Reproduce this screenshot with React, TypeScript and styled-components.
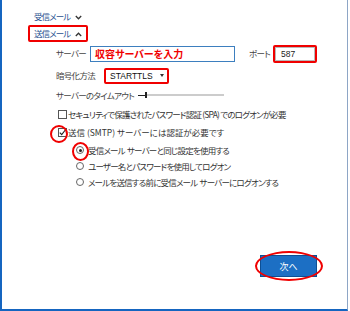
import styled, { createGlobalStyle } from 'styled-components'

//-----------------------------------------------------------------------------
// Global
//-----------------------------------------------------------------------------
const GlobalStyle = createGlobalStyle`
  html, body {
    margin: 0;
    padding: 0;
    background: #ffffff;
  }
  body {
    font-family: "Noto Sans CJK JP", "Liberation Sans", sans-serif;
    font-feature-settings: "palt";
  }
`

//-----------------------------------------------------------------------------
// Icons
//-----------------------------------------------------------------------------
const Chevron = ({ up }: { up?: boolean }): JSX.Element => (
  <svg width="7" height="5" viewBox="0 0 7 5">
    <path
      d={up ? 'M0.8 4 L3.5 1.2 L6.2 4' : 'M0.8 1 L3.5 3.8 L6.2 1'}
      fill="none"
      stroke="#333"
      strokeWidth="1.3"
    />
  </svg>
)

const CheckMark = (): JSX.Element => (
  <svg width="7" height="7" viewBox="0 0 7 7">
    <path d="M0.8 3.6 L2.7 5.6 L6.3 1" fill="none" stroke="#222" strokeWidth="1.1" />
  </svg>
)

//-----------------------------------------------------------------------------
// Component
//-----------------------------------------------------------------------------
const App = (): JSX.Element => {
  return (
    <>
      <GlobalStyle />
      <Frame>
        <Header $marked={false} style={{ marginTop: 8 }}>
          受信メール
          <Chevron />
        </Header>
        <Header $marked>
          送信メール
          <Chevron up />
        </Header>

        <Form>
          <ServerRow>
            <Label $width={34}>サーバー</Label>
            <TextBox>収容サーバーを入力</TextBox>
            <Label $width={24} style={{ marginLeft: 14 }}>ポート</Label>
            <RedBox>
              <PortInput>587</PortInput>
            </RedBox>
          </ServerRow>

          <EncRow>
            <Label $width={48}>暗号化方法</Label>
            <RedBox>
              <Select>
                STARTTLS
                <Caret />
              </Select>
            </RedBox>
          </EncRow>

          <TimeoutRow>
            <Label $width={82}>サーバーのタイムアウト</Label>
            <Slider>
              <SliderFill />
              <SliderThumb />
              <SliderTrack />
            </Slider>
          </TimeoutRow>

          <CheckRow $height={16} style={{ marginTop: 4 }}>
            <Box />
            <OptionText $tight>
              セキュリティで保護されたパスワード認証 (SPA) でのログオンが必要
            </OptionText>
          </CheckRow>

          <CheckRow $height={17} style={{ marginTop: 2 }}>
            <Ring $inset="-3px -1px -6px -8px">
              <Box>
                <CheckMark />
              </Box>
            </Ring>
            <OptionText>送信 (SMTP) サーバーには認証が必要です</OptionText>
          </CheckRow>

          <RadioRow style={{ marginTop: 1 }}>
            <Ring $inset="-4px -5px -7px -4px">
              <Radio $checked />
            </Ring>
            <OptionText $tight>受信メール&nbsp; サーバーと同じ設定を使用する</OptionText>
          </RadioRow>
          <RadioRow>
            <Radio />
            <OptionText $tight>ユーザー名とパスワードを使用してログオン</OptionText>
          </RadioRow>
          <RadioRow>
            <Radio />
            <OptionText $tight>
              メールを送信する前に受信メール&nbsp; サーバーにログオンする
            </OptionText>
          </RadioRow>
        </Form>

        <Footer>
          <Ring $inset="-4px -6px -4px -5px">
            <NextButton>次へ</NextButton>
          </Ring>
        </Footer>
      </Frame>
    </>
  )
}

//-----------------------------------------------------------------------------
// Styled Components
//-----------------------------------------------------------------------------
const Frame = styled.div`
  width: 348px;
  height: 311px;
  box-sizing: border-box;
  border-left: 2px solid #1565c0;
  border-bottom: 2px solid #1565c0;
  border-right: 1px solid #8ea6c6;
  display: flex;
  flex-direction: column;
  align-items: flex-start;
  background: #ffffff;
`
const Header = styled.div<{ $marked: boolean }>`
  display: inline-flex;
  align-items: center;
  gap: 5px;
  height: 17px;
  box-sizing: border-box;
  margin-left: 26px;
  padding: 0 4px 0 4px;
  border: 2px solid ${(p) => (p.$marked ? '#f00000' : 'transparent')};
  border-radius: 2px;
  font-size: 8.5px;
  letter-spacing: -0.9px;
  line-height: 1;
  color: #1f4f8f;
  svg {
    margin-top: 1px;
  }
`
const Form = styled.div`
  display: flex;
  flex-direction: column;
  margin-left: 54px;
  margin-top: 2px;
`
const Label = styled.div<{ $width: number }>`
  width: ${(p) => p.$width}px;
  flex-shrink: 0;
  font-size: 8.5px;
  letter-spacing: -0.7px;
  line-height: 1;
  color: #444;
  white-space: nowrap;
`
const ServerRow = styled.div`
  display: flex;
  align-items: center;
  height: 19px;
`
const TextBox = styled.div`
  width: 145px;
  height: 16px;
  box-sizing: border-box;
  border: 1px solid #3d7fbf;
  padding-left: 4px;
  display: flex;
  align-items: center;
  font-size: 10px;
  font-weight: 700;
  line-height: 1;
  color: #f00000;
  white-space: nowrap;
`
const RedBox = styled.div`
  border: 2px solid #f00000;
  border-radius: 2px;
  display: flex;
`
const PortInput = styled.div`
  width: 40px;
  height: 14px;
  box-sizing: border-box;
  border: 1px solid #b9b9b9;
  padding-left: 5px;
  display: flex;
  align-items: center;
  font-family: "Liberation Sans", sans-serif;
  font-size: 8.5px;
  color: #222;
`
const EncRow = styled.div`
  display: flex;
  align-items: center;
  height: 17px;
  margin-top: 4px;
`
const Select = styled.div`
  width: 61px;
  height: 12px;
  box-sizing: border-box;
  padding-left: 4px;
  display: flex;
  align-items: center;
  justify-content: space-between;
  padding-right: 3px;
  font-family: "Liberation Sans", sans-serif;
  font-size: 8.5px;
  color: #111;
`
const Caret = styled.span`
  width: 0;
  height: 0;
  border-left: 2.5px solid transparent;
  border-right: 2.5px solid transparent;
  border-top: 3px solid #333;
`
const TimeoutRow = styled.div`
  display: flex;
  align-items: center;
  height: 14px;
  margin-top: 4px;
`
const Slider = styled.div`
  display: flex;
  align-items: center;
  width: 86px;
  height: 8px;
`
const SliderFill = styled.div`
  width: 7px;
  height: 1px;
  background: #222;
`
const SliderThumb = styled.div`
  width: 2px;
  height: 6px;
  background: #222;
`
const SliderTrack = styled.div`
  flex: 1;
  height: 2px;
  background: #cccccc;
`
const CheckRow = styled.div<{ $height: number }>`
  display: flex;
  align-items: center;
  gap: 1px;
  height: ${(p) => p.$height}px;
  padding-left: 2px;
`
const RadioRow = styled.div`
  display: flex;
  align-items: center;
  gap: 4px;
  height: 16px;
  padding-left: 20px;
`
const Box = styled.div`
  width: 9px;
  height: 9px;
  box-sizing: border-box;
  border: 1px solid #555;
  background: #fff;
  display: flex;
  align-items: center;
  justify-content: center;
`
const Radio = styled.div<{ $checked?: boolean }>`
  width: 8px;
  height: 8px;
  box-sizing: border-box;
  border: 1px solid #666;
  border-radius: 50%;
  display: flex;
  align-items: center;
  justify-content: center;
  &::after {
    content: '';
    width: 3px;
    height: 3px;
    border-radius: 50%;
    background: ${(p) => (p.$checked ? '#222' : 'transparent')};
  }
`
const Ring = styled.div<{ $inset: string }>`
  position: relative;
  display: flex;
  &::after {
    content: '';
    position: absolute;
    inset: ${(p) => p.$inset};
    border: 2px solid #f00000;
    border-radius: 50%;
    pointer-events: none;
  }
`
const OptionText = styled.span<{ $tight?: boolean }>`
  font-size: 8.5px;
  letter-spacing: ${(p) => (p.$tight ? '-0.8px' : '0')};
  line-height: 1;
  color: #333;
  white-space: nowrap;
`
const Footer = styled.div`
  margin-top: auto;
  align-self: flex-end;
  padding-right: 30px;
  padding-bottom: 32px;
`
const NextButton = styled.div`
  width: 57px;
  height: 22px;
  box-sizing: border-box;
  background: #1c6fc4;
  border: 1px solid #0d4f94;
  color: #ffffff;
  font-size: 9px;
  display: flex;
  align-items: center;
  justify-content: center;
`

export default App
